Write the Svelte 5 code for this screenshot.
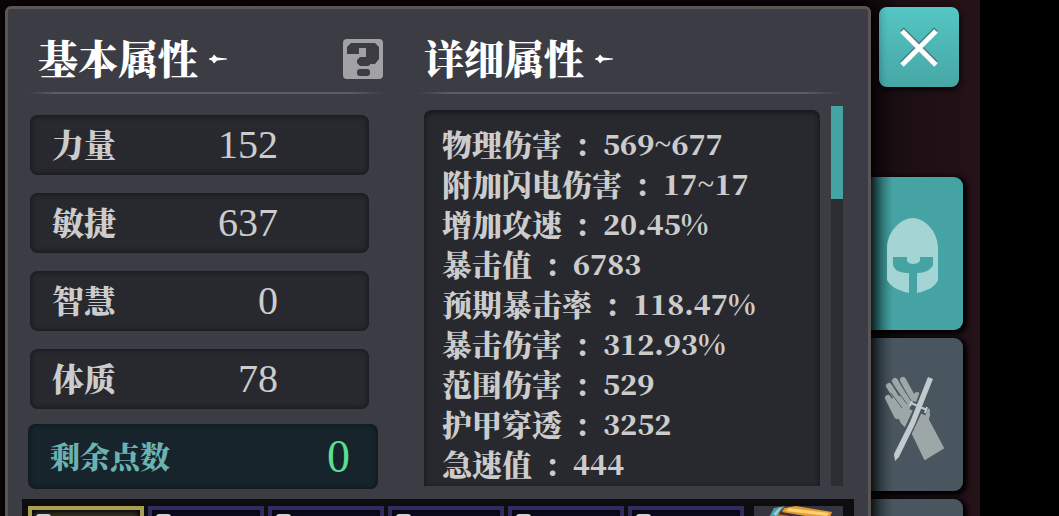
<script>
  const basics = [
    { name: '力量', value: 152 },
    { name: '敏捷', value: 637 },
    { name: '智慧', value: 0 },
    { name: '体质', value: 78 }
  ];
  const details = [
    { name: '物理伤害', value: '569~677' },
    { name: '附加闪电伤害', value: '17~17' },
    { name: '增加攻速', value: '20.45%' },
    { name: '暴击值', value: '6783' },
    { name: '预期暴击率', value: '118.47%' },
    { name: '暴击伤害', value: '312.93%' },
    { name: '范围伤害', value: '529' },
    { name: '护甲穿透', value: '3252' },
    { name: '急速值', value: '444' }
  ];
  const slots = [0, 1, 2, 3, 4, 5];
  let selected = $state(0);
</script>

{#snippet spark()}
  <svg class="spark" viewBox="0 0 18 10" aria-hidden="true">
    <path d="M0 4.500L3 3.500L5 0.500L8 3.500L18 4.500V5.500L8 6.500L5 9.500L3 6.500L0 5.500Z" fill="#fff" />
  </svg>
{/snippet}

<div class="stage">
  <main class="panel">
    <div class="columns">
      <section>
        <header>
          <h2>基本属性</h2>
          {@render spark()}
          <button class="help" aria-label="帮助">
            <svg viewBox="0 0 40 40" aria-hidden="true">
              <rect width="40" height="40" rx="4" fill="#a2a2a6" />
              <path d="M8 4H32L36 8V20L32 25H27V26L25 27H17L14 24V21L17 18H23V9H16V15H4V8Z" fill="#3c3c44" />
              <rect x="14" y="30" width="13" height="7" rx="3" fill="#3c3c44" />
            </svg>
          </button>
        </header>
        <dl class="basics">
          {#each basics as stat}
            <div class="stat"><dt>{stat.name}</dt><dd>{stat.value}</dd></div>
          {/each}
        </dl>
        <dl class="points"><dt>剩余点数</dt><dd>0</dd></dl>
      </section>

      <section>
        <header class="detail-head">
          <h2>详细属性</h2>
          {@render spark()}
        </header>
        <div class="detail-body">
          <ul>
            {#each details as item}
              <li><span>{item.name}</span><span class="colon">:</span><span class="num">{item.value}</span></li>
            {/each}
          </ul>
          <div class="track"><div class="thumb"></div></div>
        </div>
      </section>
    </div>

    <div class="bag">
      {#each slots as slot}
        <button class="slot" class:selected={selected === slot} aria-label="物品栏" onclick={() => (selected = slot)}>
          <span class="mark"></span>
        </button>
      {/each}
      <button class="chest" aria-label="宝箱">
        <svg viewBox="0 0 89 116" aria-hidden="true">
          <path d="M15 12L22 1L34 0L27 8L70 14L78 30L70 78L16 70Z" fill="#582b12" />
          <path d="M30 2L42 0L78 6L75 14L28 6Z" fill="#e29a38" />
          <path d="M35 2L75 7L73 10L32 5Z" fill="#ffd071" />
          <path d="M23 8L72 16L70 24L20 16Z" fill="#bd7421" />
          <path d="M15 11L20 2L31 0L26 6L21 15Z" fill="#4f9aa0" />
          <path d="M19 8L25 2L28 1L22 10Z" fill="#96ced0" />
        </svg>
      </button>
    </div>
  </main>

  <nav>
    <button class="close" aria-label="关闭">
      <svg viewBox="0 0 80 80" aria-hidden="true">
        <path d="M23 23L57 57M57 23L23 57" stroke="#477d7e" stroke-width="5" transform="translate(0 -1)" />
        <path d="M23 24L57 58M57 24L23 58" stroke="#fff" stroke-width="5" />
      </svg>
    </button>
    <button class="tab active" aria-label="角色">
      <svg viewBox="0 0 92 153" aria-hidden="true">
        <path d="M16 70C17 53 31 41 41.500 41C53 41 66 53 67 70V103C64 110 56 114 46 116V96C56 96 61 91 62 88V80H49V84C46 88 38 88 36 84V80H22V88C24 94 29 96 38 96V116C28 114 20 110 16 103Z" fill="#a4d4d4" />
      </svg>
    </button>
    <button class="tab" aria-label="装备">
      <svg viewBox="0 0 92 153" aria-hidden="true">
        <g fill="#9da7a8" stroke="#9da7a8" stroke-linejoin="round" stroke-linecap="round">
          <path d="M19 62L31 85L42 96L54 121L72 110L57 82L58 72L45 64L38 56Z" stroke-width="2" />
          <path d="M17 60L26 78M18 48L32 70M24 43L38 66M32 42L44 64" fill="none" stroke-width="6" />
          <path d="M46 57L49 67L56 77" fill="none" stroke-width="6" />
        </g>
        <path d="M20 55L31 70M22 47L36 66M29 45L41 64" stroke="#55636a" stroke-width="1" />
        <path d="M59 40L46 74L25 119M40 67L56 73" fill="none" stroke="#49565f" stroke-width="9" />
        <path d="M57 39L62 41L44 86L28 119L24 123L23 116L39 84Z" fill="#c1cbce" />
        <path d="M40 65L56 72M41 63L39 68M56 69L54 75" fill="none" stroke="#c1cbce" stroke-width="2" />
      </svg>
    </button>
    <button class="tab" aria-label="技能"></button>
  </nav>
</div>

<style>
  :global(body) {
    margin: 0;
    background: #000;
  }
  .stage {
    box-sizing: border-box;
    height: 100vh;
    overflow: hidden;
    display: flex;
    margin-right: 79px;
    padding-left: 5px;
    background: linear-gradient(90deg, #090608 0%, #0b0609 88%, #1c0f13 92%, #241218 100%);
    color: #ccc;
    font-family: "Noto Serif CJK SC", "Liberation Serif", "Noto Sans CJK SC", serif;
  }
  button {
    display: block;
    padding: 0;
    border: 0;
    cursor: pointer;
  }
  svg {
    display: block;
    width: 100%;
  }
  h2, dl, dt, dd, ul {
    margin: 0;
    padding: 0;
  }
  .panel {
    position: relative;
    z-index: 1;
    flex: 1;
    min-width: 0;
    height: 640px;
    margin-top: 6px;
    border: 3px solid #5b5555;
    border-radius: 6px;
    box-sizing: border-box;
    background: #3c3c44;
    box-shadow: 2px 0 14px #000;
  }
  .columns {
    display: grid;
    grid-template-columns: minmax(0, 356fr) minmax(0, 425fr);
    gap: 34px;
    padding: 0 25px 0 20px;
  }
  header {
    height: 85px;
    box-sizing: border-box;
    display: flex;
    align-items: center;
    padding: 14px 1px 0 10px;
    background: linear-gradient(90deg, transparent, #5a6069 8%, #5a6069 90%, transparent) bottom / 100% 2px no-repeat;
  }
  .detail-head {
    padding-left: 6px;
  }
  h2 {
    padding-bottom: 4px;
    color: #fff;
    font-size: 40px;
    line-height: 48px;
    font-weight: 900;
    white-space: nowrap;
  }
  .spark {
    width: 18px;
    height: 10px;
    margin-left: 11px;
  }
  .help {
    width: 40px;
    height: 40px;
    margin-left: auto;
    background: none;
  }
  .basics {
    display: grid;
    gap: 18px;
    margin: 21px 15px 15px 2px;
  }
  .stat, .points {
    box-sizing: border-box;
    display: flex;
    justify-content: space-between;
    align-items: center;
    height: 60px;
    padding: 0 91px 0 22px;
    border-radius: 8px;
    background: #28292e;
    box-shadow: inset 0 0 5px 1px #17181b;
  }
  dt {
    padding-bottom: 4px;
    font-size: 32px;
    line-height: 40px;
    font-weight: 900;
  }
  dd {
    font-family: "Liberation Serif", serif;
    font-size: 40px;
    line-height: 40px;
  }
  .points {
    height: 65px;
    margin-right: 6px;
    padding: 0 28px 0 22px;
    background: #17242c;
    box-shadow: inset 0 0 5px 1px #0d171c;
  }
  .points dt {
    color: #6ab3b1;
    font-size: 30px;
  }
  .points dd {
    color: #59df91;
    font-size: 46px;
  }
  .detail-body {
    display: flex;
    gap: 11px;
    height: 380px;
    margin-top: 12px;
  }
  ul {
    flex: 1;
    min-width: 0;
    margin: 4px 0 0 6px;
    padding: 13px 0 0 18px;
    list-style: none;
    overflow: hidden;
    border-radius: 8px 8px 0 0;
    background: #28292e;
    box-shadow: inset 0 2px 5px 1px #17181b;
  }
  li {
    display: flex;
    align-items: center;
    height: 40px;
    font-size: 30px;
    line-height: 40px;
    font-weight: 900;
    white-space: nowrap;
  }
  .colon {
    width: 41px;
    text-align: center;
  }
  .num {
    font-size: 28px;
  }
  .track {
    width: 12px;
    background: #2c2d32;
  }
  .thumb {
    height: 93px;
    background: #46a3a4;
  }
  .bag {
    display: flex;
    gap: 4px;
    height: 130px;
    box-sizing: border-box;
    margin: 10px 14px 0;
    padding: 7px 11px 7px 6px;
    background: #0d0d10;
  }
  .slot {
    flex: 1;
    min-width: 0;
    height: 116px;
    box-sizing: border-box;
    padding: 4px;
    border: 4px solid #302c62;
    background: #0c0c20;
    box-shadow: inset 0 0 5px 2px #050510;
  }
  .slot.selected {
    border-color: #aaa052;
    background: #34321c;
  }
  .mark {
    display: block;
    width: 15px;
    height: 18px;
    margin-bottom: 82px;
    border-radius: 3px;
    background: #d0d0d2;
  }
  .chest {
    width: 89px;
    height: 116px;
    margin-left: 6px;
    overflow: hidden;
    background: #34353f;
  }
  nav {
    width: 109px;
    display: flex;
    flex-direction: column;
    gap: 8px;
  }
  .close {
    width: 80px;
    height: 80px;
    margin: 7px 0 82px 8px;
    border-radius: 8px;
    background: linear-gradient(#54c6c4, #46a7a6);
    box-shadow: 0 2px 6px #000;
  }
  .tab {
    flex: none;
    width: 92px;
    height: 153px;
    border-radius: 0 9px 9px 0;
    background: linear-gradient(90deg, #26323a, #49565f 22px);
    box-shadow: 2px 2px 5px 2px #000;
  }
  .tab.active {
    background: linear-gradient(90deg, #205354, #45a3a4 22px);
  }
</style>
